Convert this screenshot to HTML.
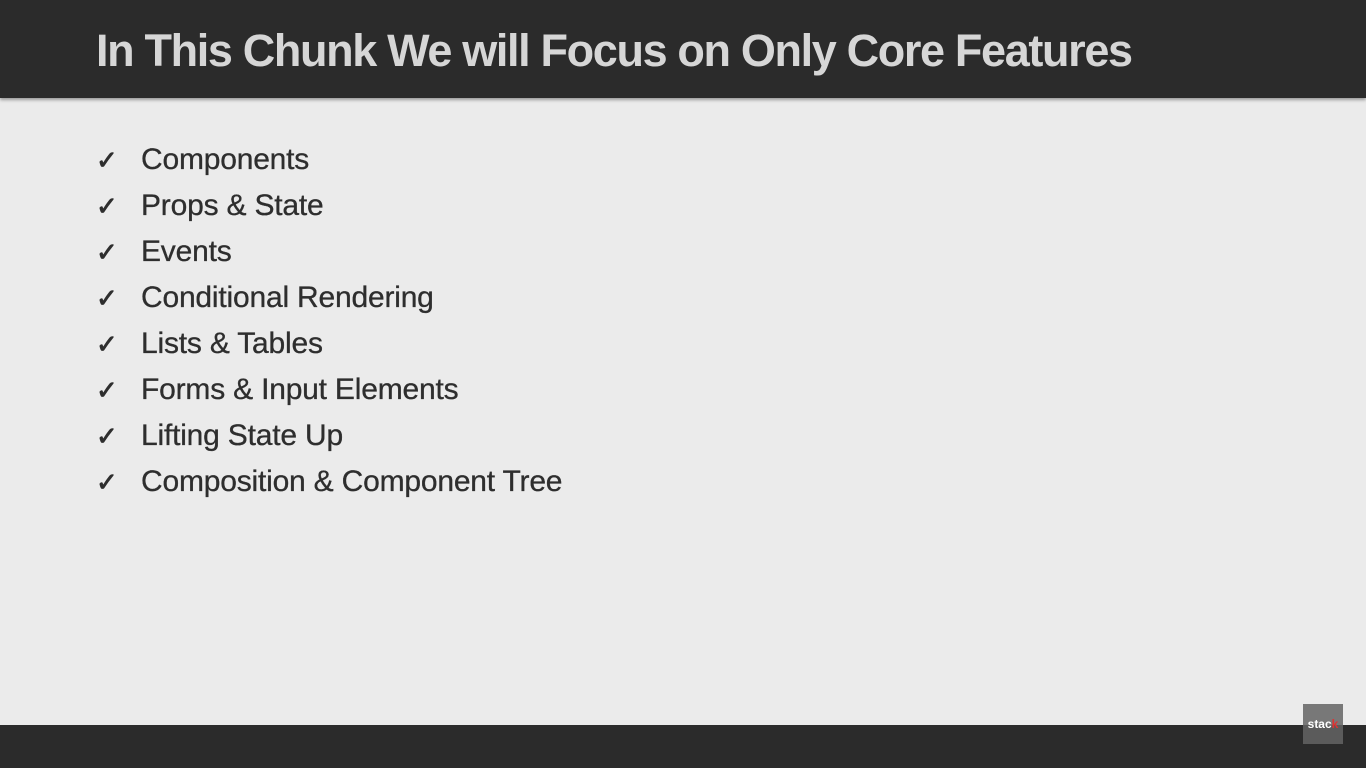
<!DOCTYPE html>
<html><head><meta charset="utf-8"><style>
html,body{margin:0;padding:0}
body{width:1366px;height:768px;background:#ebebeb;position:relative;overflow:hidden;font-family:"Liberation Sans",Arial,sans-serif}
.hdr{position:absolute;left:0;top:0;width:1366px;height:98px;background:#2b2b2b;box-shadow:0 2px 3px rgba(0,0,0,.35)}
.hdr h1{position:absolute;left:96px;top:23px;margin:0;font-size:45px;letter-spacing:-1.35px;line-height:56px;font-weight:bold;color:#d6d6d6;white-space:nowrap}
ul{position:absolute;left:96px;top:137px;margin:0;padding:0;list-style:none}
li{height:46px;line-height:46px;font-size:30px;letter-spacing:-0.2px;color:#2e2e2e;white-space:nowrap;-webkit-text-stroke:0.3px #2e2e2e}
li span{display:inline-block;width:45px;font-size:26px;-webkit-text-stroke:0.8px #2e2e2e}
.ftr{position:absolute;left:0;top:725px;width:1366px;height:43px;background:#2b2b2b}
.logo{position:absolute;left:1303px;top:704px;width:40px;height:40px;background:rgba(100,100,100,.85);color:#fff;font-size:12px;font-weight:bold;text-align:center;line-height:40px}
.logo b{color:#d33}
</style></head><body>
<div class="hdr"><h1>In This Chunk We will Focus on Only Core Features</h1></div>
<ul>
<li><span>✓</span>Components</li>
<li><span>✓</span>Props &amp; State</li>
<li><span>✓</span>Events</li>
<li><span>✓</span>Conditional Rendering</li>
<li><span>✓</span>Lists &amp; Tables</li>
<li><span>✓</span>Forms &amp; Input Elements</li>
<li><span>✓</span>Lifting State Up</li>
<li><span>✓</span>Composition &amp; Component Tree</li>
</ul>
<div class="ftr"></div>
<div class="logo">stac<b>k</b></div>
</body></html>
